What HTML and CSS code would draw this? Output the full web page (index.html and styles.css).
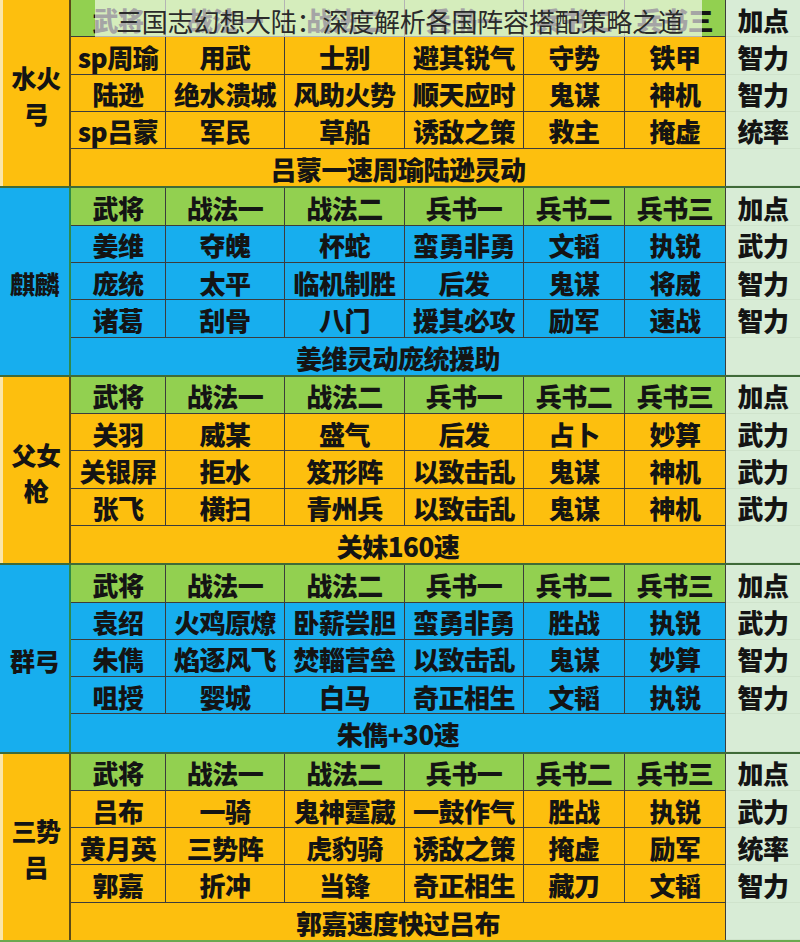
FILE: index.html
```html
<!DOCTYPE html>
<html lang="zh-CN">
<head>
<meta charset="utf-8">
<title>三国志幻想大陆阵容</title>
<link rel="stylesheet" href="styles.css">
</head>
<body>
<div class="sheet">
  <section class="sec orange">
    <div class="label">水火<br>弓</div>
    <div class="cell hd">武将</div><div class="cell hd">战法一</div><div class="cell hd">战法二</div><div class="cell hd">兵书一</div><div class="cell hd">兵书二</div><div class="cell hd">兵书三</div><div class="pt">加点</div>
    <div class="cell">sp周瑜</div><div class="cell">用武</div><div class="cell">士别</div><div class="cell">避其锐气</div><div class="cell">守势</div><div class="cell">铁甲</div><div class="pt">智力</div>
    <div class="cell">陆逊</div><div class="cell">绝水溃城</div><div class="cell">风助火势</div><div class="cell">顺天应时</div><div class="cell">鬼谋</div><div class="cell">神机</div><div class="pt">智力</div>
    <div class="cell">sp吕蒙</div><div class="cell">军民</div><div class="cell">草船</div><div class="cell">诱敌之策</div><div class="cell">救主</div><div class="cell">掩虚</div><div class="pt">统率</div>
    <div class="cell sum">吕蒙一速周瑜陆逊灵动</div><div class="pt"></div>
  </section>
  <section class="sec blue">
    <div class="label">麒麟</div>
    <div class="cell hd">武将</div><div class="cell hd">战法一</div><div class="cell hd">战法二</div><div class="cell hd">兵书一</div><div class="cell hd">兵书二</div><div class="cell hd">兵书三</div><div class="pt">加点</div>
    <div class="cell">姜维</div><div class="cell">夺魄</div><div class="cell">杯蛇</div><div class="cell">蛮勇非勇</div><div class="cell">文韬</div><div class="cell">执锐</div><div class="pt">武力</div>
    <div class="cell">庞统</div><div class="cell">太平</div><div class="cell">临机制胜</div><div class="cell">后发</div><div class="cell">鬼谋</div><div class="cell">将威</div><div class="pt">智力</div>
    <div class="cell">诸葛</div><div class="cell">刮骨</div><div class="cell">八门</div><div class="cell">援其必攻</div><div class="cell">励军</div><div class="cell">速战</div><div class="pt">智力</div>
    <div class="cell sum">姜维灵动庞统援助</div><div class="pt"></div>
  </section>
  <section class="sec orange">
    <div class="label">父女<br>枪</div>
    <div class="cell hd">武将</div><div class="cell hd">战法一</div><div class="cell hd">战法二</div><div class="cell hd">兵书一</div><div class="cell hd">兵书二</div><div class="cell hd">兵书三</div><div class="pt">加点</div>
    <div class="cell">关羽</div><div class="cell">威某</div><div class="cell">盛气</div><div class="cell">后发</div><div class="cell">占卜</div><div class="cell">妙算</div><div class="pt">武力</div>
    <div class="cell">关银屏</div><div class="cell">拒水</div><div class="cell">笈形阵</div><div class="cell">以致击乱</div><div class="cell">鬼谋</div><div class="cell">神机</div><div class="pt">武力</div>
    <div class="cell">张飞</div><div class="cell">横扫</div><div class="cell">青州兵</div><div class="cell">以致击乱</div><div class="cell">鬼谋</div><div class="cell">神机</div><div class="pt">武力</div>
    <div class="cell sum">关妹160速</div><div class="pt"></div>
  </section>
  <section class="sec blue">
    <div class="label">群弓</div>
    <div class="cell hd">武将</div><div class="cell hd">战法一</div><div class="cell hd">战法二</div><div class="cell hd">兵书一</div><div class="cell hd">兵书二</div><div class="cell hd">兵书三</div><div class="pt">加点</div>
    <div class="cell">袁绍</div><div class="cell">火鸡原燎</div><div class="cell">卧薪尝胆</div><div class="cell">蛮勇非勇</div><div class="cell">胜战</div><div class="cell">执锐</div><div class="pt">武力</div>
    <div class="cell">朱儁</div><div class="cell">焰逐风飞</div><div class="cell">焚輜营垒</div><div class="cell">以致击乱</div><div class="cell">鬼谋</div><div class="cell">妙算</div><div class="pt">智力</div>
    <div class="cell">咀授</div><div class="cell">婴城</div><div class="cell">白马</div><div class="cell">奇正相生</div><div class="cell">文韬</div><div class="cell">执锐</div><div class="pt">智力</div>
    <div class="cell sum">朱儁+30速</div><div class="pt"></div>
  </section>
  <section class="sec orange last">
    <div class="label">三势<br>吕</div>
    <div class="cell hd">武将</div><div class="cell hd">战法一</div><div class="cell hd">战法二</div><div class="cell hd">兵书一</div><div class="cell hd">兵书二</div><div class="cell hd">兵书三</div><div class="pt">加点</div>
    <div class="cell">吕布</div><div class="cell">一骑</div><div class="cell">鬼神霆葳</div><div class="cell">一鼓作气</div><div class="cell">胜战</div><div class="cell">执锐</div><div class="pt">武力</div>
    <div class="cell">黄月英</div><div class="cell">三势阵</div><div class="cell">虎豹骑</div><div class="cell">诱敌之策</div><div class="cell">掩虚</div><div class="cell">励军</div><div class="pt">统率</div>
    <div class="cell">郭嘉</div><div class="cell">折冲</div><div class="cell">当锋</div><div class="cell">奇正相生</div><div class="cell">藏刀</div><div class="cell">文韬</div><div class="pt">智力</div>
    <div class="cell sum">郭嘉速度快过吕布</div><div class="pt"></div>
  </section>
  <div class="title">三国志幻想大陆：深度解析各国阵容搭配策略之道</div>
</div>
</body>
</html>
```

FILE: styles.css
```css
html, body {
  margin: 0;
  padding: 0;
  background: #d8ecd6;
}
body {
  width: 800px;
  height: 942px;
  overflow: hidden;
  font-family: "Noto Sans CJK SC", "Noto Sans", sans-serif;
}
.sheet {
  position: relative;
  width: 800px;
  height: 942px;
  display: flex;
  flex-direction: column;
}
.sec {
  flex: 1 1 0;
  min-height: 0;
  display: grid;
  grid-template-columns: 71px 95px 119px 120px 119px 101px 101px 74px;
  grid-template-rows: repeat(5, minmax(0, 1fr));
  border-bottom: 2px solid #3f6b38;
  box-sizing: border-box;
}
.sec.last {
  border-bottom-color: #6aa84f;
}
.label, .cell, .pt {
  display: flex;
  align-items: center;
  justify-content: center;
  font-weight: 900;
  font-size: 26px;
  line-height: 1;
  color: #141414;
  box-sizing: border-box;
  white-space: nowrap;
  letter-spacing: -0.5px;
  min-height: 0;
  padding-top: 3px;
}
.label {
  grid-row: 1 / span 5;
  text-align: center;
  line-height: 36px;
  font-size: 25px;
  border-right: 2px solid #5c4a17;
}
.orange .label {
  border-left: 3px solid #fbe6a8;
}
.blue .label {
  border-right-color: #2f8a4a;
}
.cell {
  border-right: 1px solid #3c3c3c;
  border-bottom: 1px solid #3c3c3c;
}
.orange .label, .orange .cell {
  background: #fdbf0e;
}
.blue .label, .blue .cell {
  background: #17aeee;
}
.cell.hd {
  background: #92d050;
}
.cell.sum {
  grid-column: 2 / span 6;
  border-bottom: none;
}
.pt {
  background: #d8ecd6;
  border-bottom: 1px solid #cfe3cc;
}
.title {
  position: absolute;
  left: 95px;
  top: 0;
  width: 607px;
  height: 37px;
  padding-left: 21px;
  box-sizing: border-box;
  background: rgba(255, 255, 255, 0.62);
  font-family: "Noto Sans CJK SC", sans-serif;
  font-weight: 400;
  font-size: 26px;
  line-height: 42px;
  color: #2a2a2a;
  white-space: nowrap;
  letter-spacing: -0.2px;
}
```
